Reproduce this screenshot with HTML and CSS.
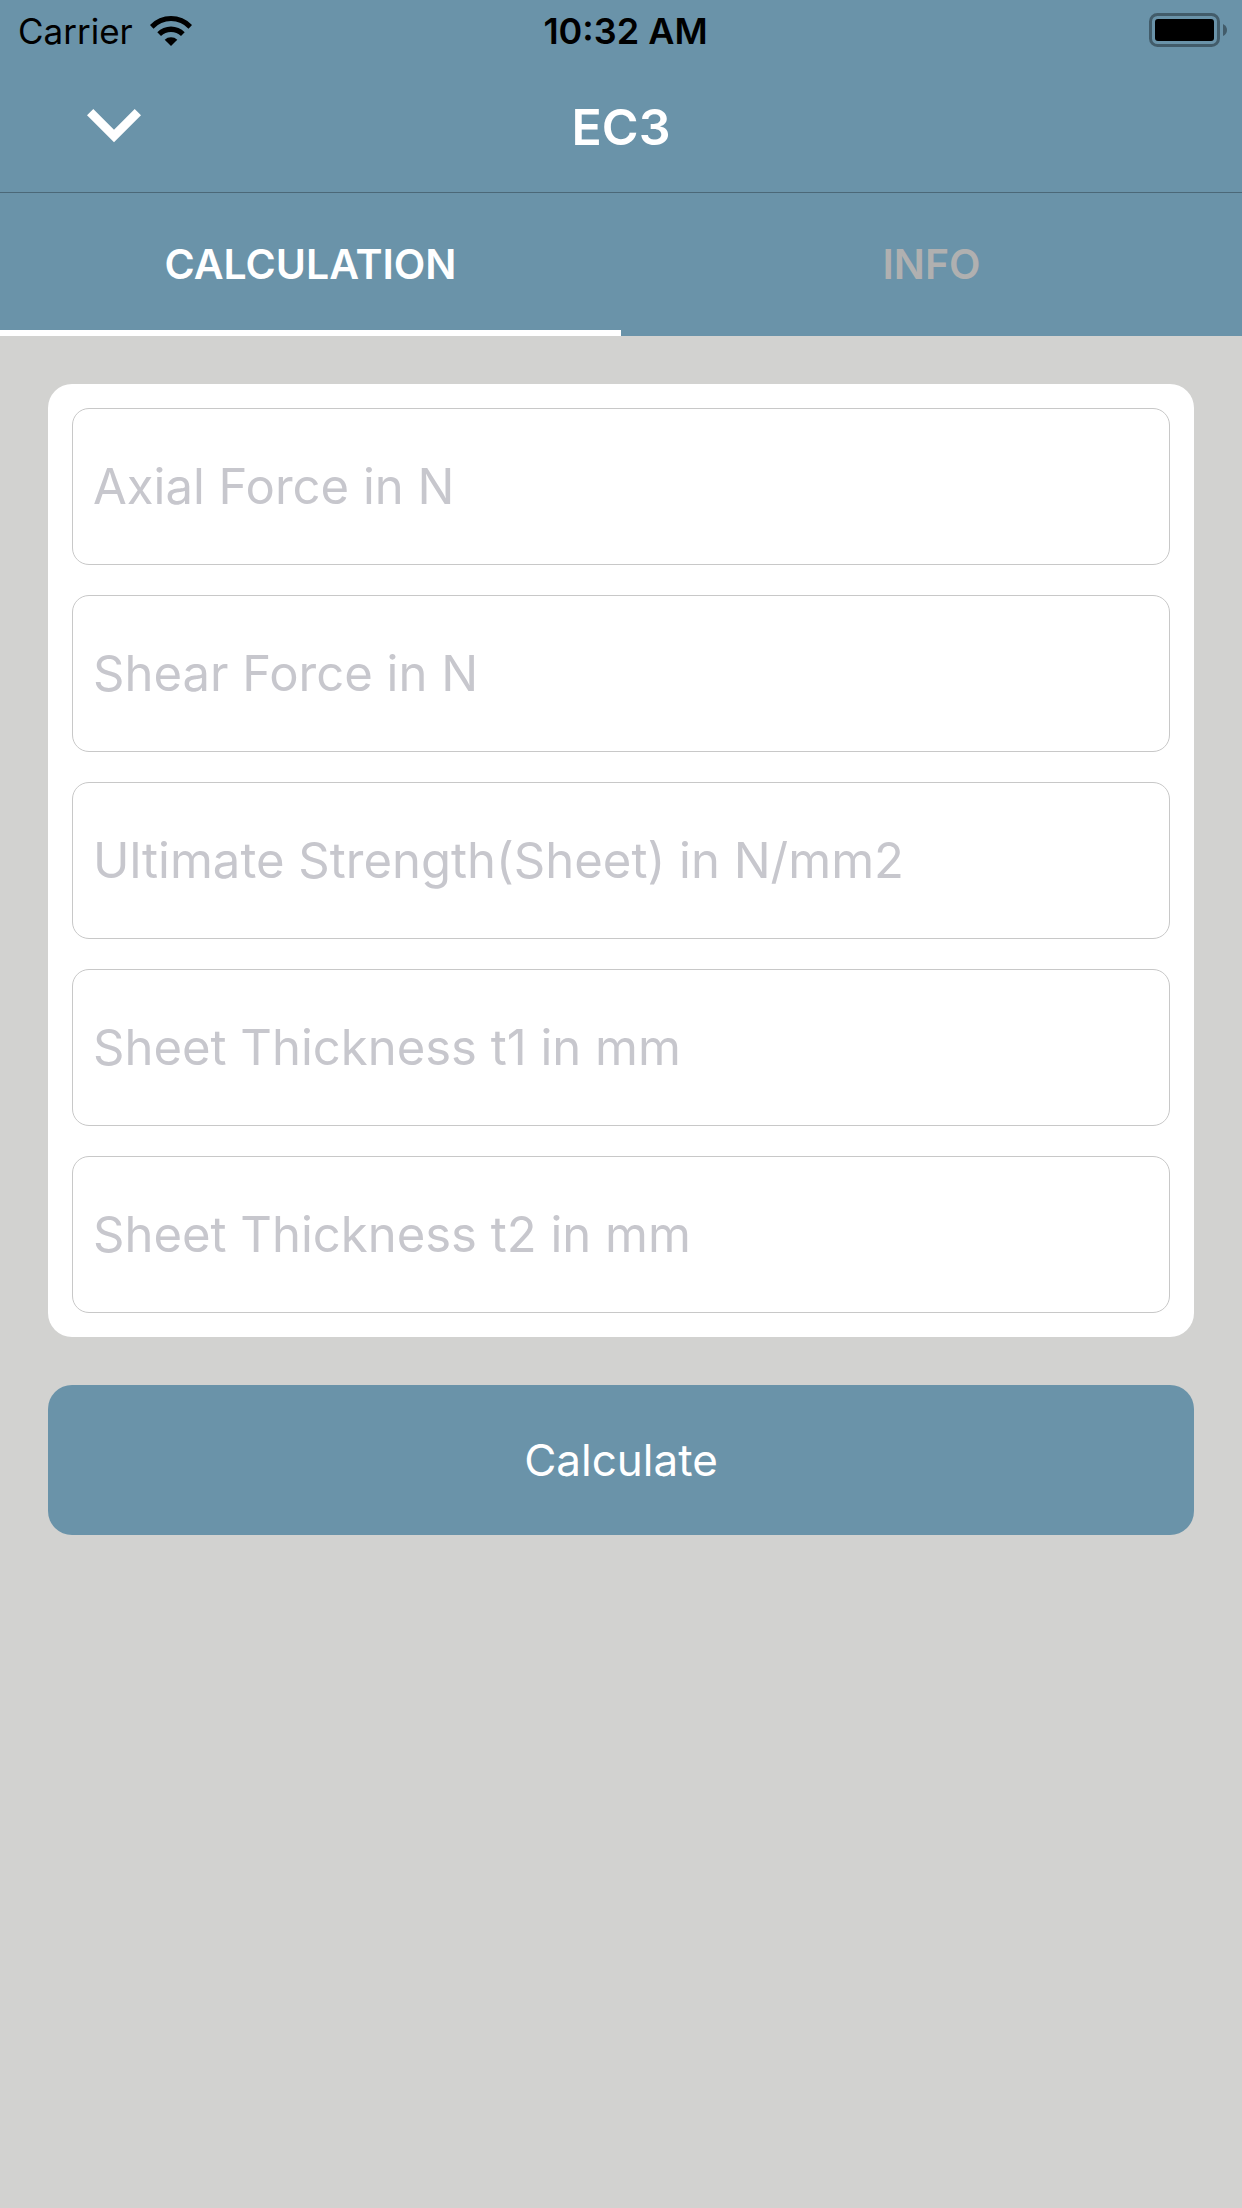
FILE: index.html
```html
<!DOCTYPE html>
<html lang="en">
<head>
<meta charset="utf-8">
<meta name="viewport" content="width=device-width, initial-scale=1">
<title>EC3</title>
<link rel="stylesheet" href="styles.css">
</head>
<body>
<header class="header">
  <div class="status">
    <div class="status-left">
      <span>Carrier</span>
      <svg class="wifi" width="42" height="30" viewBox="0 0 42 30" aria-hidden="true">
        <path d="M0 9A29 29 0 0 1 42 9L38.500 12.700A24 24 0 0 0 3.500 12.700Z"/>
        <path d="M7.300 16.300A19 19 0 0 1 34.700 16.300L31 20A14.500 14.500 0 0 0 11 20Z"/>
        <path d="M14.700 23.700A9.500 9.500 0 0 1 27.300 23.700L21 30Z"/>
      </svg>
    </div>
    <time class="clock">10:32 AM</time>
    <svg class="battery" width="78" height="34" viewBox="0 0 78 34" aria-hidden="true">
      <rect class="battery-case" x="1.500" y="1.500" width="68" height="31" rx="7"/>
      <rect x="6" y="6" width="59" height="22" rx="3"/>
      <path class="battery-tip" d="M74 11Q78 13 78 17T74 23Z"/>
    </svg>
  </div>
  <div class="navbar">
    <button class="back" type="button" aria-label="Close">
      <svg width="54" height="34" viewBox="0 0 54 34" aria-hidden="true">
        <path d="M6.300 0L27 20.700L47.700 0L54 6.300L27 33.300L0 6.300Z"/>
      </svg>
    </button>
    <h1 class="title">EC3</h1>
  </div>
  <nav class="tabs">
    <a class="tab tab-active" href="#calculation" aria-current="page">CALCULATION</a>
    <a class="tab" href="#info">INFO</a>
  </nav>
</header>
<main>
  <form class="form" id="calculation">
    <div class="card">
      <input class="field" type="text" inputmode="decimal" aria-label="Axial Force in N" placeholder="Axial Force in N">
      <input class="field" type="text" inputmode="decimal" aria-label="Shear Force in N" placeholder="Shear Force in N">
      <input class="field" type="text" inputmode="decimal" aria-label="Ultimate Strength(Sheet) in N/mm2" placeholder="Ultimate Strength(Sheet) in N/mm2">
      <input class="field" type="text" inputmode="decimal" aria-label="Sheet Thickness t1 in mm" placeholder="Sheet Thickness t1 in mm">
      <input class="field" type="text" inputmode="decimal" aria-label="Sheet Thickness t2 in mm" placeholder="Sheet Thickness t2 in mm">
    </div>
    <button class="submit" type="submit">Calculate</button>
  </form>
</main>
</body>
</html>
```
FILE: styles.css
```css
* {
  box-sizing: border-box;
}

body {
  margin: 0;
  background: #d2d2d0;
  font-family: Inter, "Liberation Sans", sans-serif;
}

.header {
  background: #6a93a9;
}

.status {
  display: grid;
  grid-template-columns: 1fr auto 1fr;
  align-items: center;
  height: 60px;
  padding: 0 15px 0 18px;
  font-size: 35px;
  line-height: 42px;
  color: #000;
}

.status-left {
  display: flex;
  align-items: center;
  gap: 17px;
  padding-top: 2px;
}

.clock {
  padding: 2px 0 0 6px;
  font-size: 36px;
  font-weight: 600;
}

.battery {
  justify-self: end;
}

.battery-case {
  fill: none;
  stroke: #425c6a;
  stroke-width: 3;
}

.battery-tip {
  fill: #425c6a;
}

.navbar {
  display: grid;
  grid-template-columns: 1fr auto 1fr;
  align-items: center;
  height: 133px;
  padding: 0 48px;
  border-bottom: 1px solid #4b6878;
}

.back {
  display: flex;
  justify-self: start;
  padding: 38px 39px;
  border: 0;
  background: none;
}

.back svg {
  fill: #fff;
}

.title {
  margin: 0;
  padding-top: 2px;
  font-size: 50px;
  line-height: 60px;
  font-weight: 600;
  color: #fff;
}

.tabs {
  display: grid;
  grid-template-columns: 1fr 1fr;
}

.tab {
  padding: 46px 0 40px;
  border-bottom: 6px solid transparent;
  font-size: 41px;
  line-height: 51px;
  font-weight: 600;
  text-align: center;
  text-decoration: none;
  color: #b0b0b0;
}

.tab-active {
  border-color: #fff;
  color: #fff;
}

.form {
  display: grid;
  gap: 48px;
  padding: 48px;
}

.card {
  display: grid;
  gap: 30px;
  padding: 24px;
  border-radius: 24px;
  background: #fff;
}

.field {
  width: 100%;
  height: 157px;
  padding: 0 20px;
  border: 1px solid #c8c8c8;
  border-radius: 17px;
  background: #fff;
  font: inherit;
  font-size: 49px;
  color: #000;
}

.field::placeholder {
  color: #c7c7cd;
  opacity: 1;
}

.submit {
  height: 150px;
  border: 0;
  border-radius: 24px;
  background: #6a93a9;
  font: inherit;
  font-size: 44px;
  color: #fff;
}
```
